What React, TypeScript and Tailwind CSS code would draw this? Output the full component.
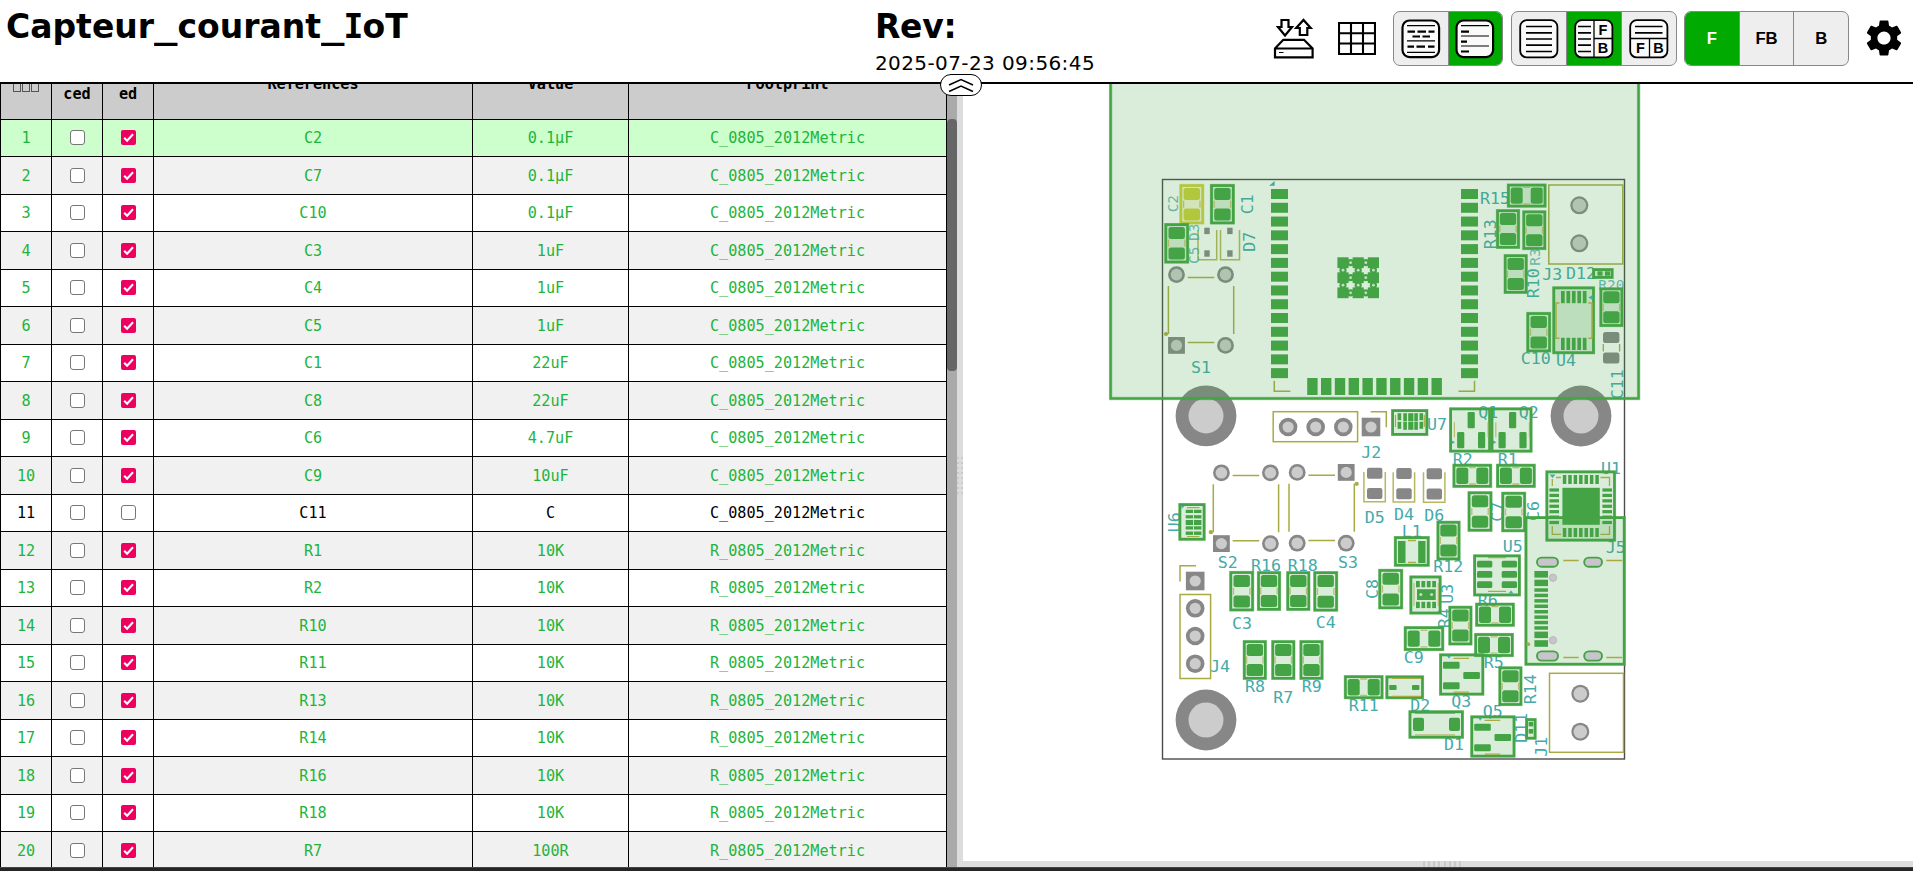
import React from "react";
import { MdSettings } from "react-icons/md";

const G = "#44a344";
const SILK = "#aaaa44";
const PAD = "#878787";
const HOLE = "#cccccc";

type Row = [string, string, string];
const C = "C_0805_2012Metric";
const R = "R_0805_2012Metric";
const rows: Row[] = [
  ["C2", "0.1µF", C], ["C7", "0.1µF", C], ["C10", "0.1µF", C], ["C3", "1uF", C], ["C4", "1uF", C],
  ["C5", "1uF", C], ["C1", "22uF", C], ["C8", "22uF", C], ["C6", "4.7uF", C], ["C9", "10uF", C],
  ["C11", "C", C], ["R1", "10K", R], ["R2", "10K", R], ["R10", "10K", R], ["R11", "10K", R],
  ["R13", "10K", R], ["R14", "10K", R], ["R16", "10K", R], ["R18", "10K", R], ["R7", "100R", R],
];

function Check({ on }: { on: boolean }) {
  return on ? (
    <svg width="15" height="15" viewBox="0 0 15 15">
      <rect width="15" height="15" rx="2" fill="#ed0060" />
      <path d="M3.2 7.8 L6.1 10.7 L12 4.2" fill="none" stroke="#fff" strokeWidth="2.1" />
    </svg>
  ) : (
    <span className="block h-[15px] w-[15px] rounded-[3px] border border-[#767676] bg-white" />
  );
}

const COLS = "grid grid-cols-[52px_51px_51px_319px_156px_318px]";

function BomTable() {
  return (
    <div className="flex h-[783px] w-[957px] overflow-hidden bg-[#aaa]">
      <div className="w-[947px] shrink-0 font-['DejaVu_Sans_Mono',monospace] text-[15.17px] leading-none">
        <div className={`${COLS} h-[36px] border-b border-black bg-[#ccc] text-center font-bold text-black`}>
          <div className="flex justify-center gap-[1px] overflow-hidden border-x border-black">
            <span className="-mt-[4px] h-[12px] w-[8px] border border-[#555]" />
            <span className="-mt-[4px] h-[12px] w-[8px] border border-[#555]" />
            <span className="-mt-[4px] h-[12px] w-[8px] border border-[#555]" />
          </div>
          <div className="overflow-hidden border-r border-black pt-[3px]">ced</div>
          <div className="overflow-hidden border-r border-black pt-[3px]">ed</div>
          <div className="overflow-hidden border-r border-black"><div className="-mt-[7px]">References</div></div>
          <div className="overflow-hidden border-r border-black"><div className="-mt-[7px]">Value</div></div>
          <div className="overflow-hidden border-r border-black"><div className="-mt-[7px]">Footprint</div></div>
        </div>
        {rows.map(([ref, val, fp], i) => {
          const placed = i !== 10;
          const bg = i === 0 ? "bg-[#ccffcc]" : i % 2 ? "bg-[#f1f1f1]" : "bg-white";
          const cell = "flex items-center justify-center border-r border-b border-black";
          return (
            <div key={ref} className={`${COLS} ${i % 2 ? "h-[38px]" : "h-[37px]"} ${bg} ${placed ? "text-[#1eb43c]" : "text-black"}`}>
              <div className={`${cell} border-l pt-[2px]`}>{i + 1}</div>
              <div className={`${cell} pb-[1px]`}><Check on={false} /></div>
              <div className={`${cell} pb-[1px]`}><Check on={placed} /></div>
              <div className={`${cell} pt-[2px]`}>{ref}</div>
              <div className={`${cell} pt-[2px]`}>{val}</div>
              <div className={`${cell} pt-[2px]`}>{fp}</div>
            </div>
          );
        })}
      </div>
      <div className="w-[10px] shrink-0 pt-[35px]">
        <div className="h-[252px] rounded-[4px] bg-[#666]" />
      </div>
    </div>
  );
}

/* ---------- board ---------- */

function Box({ x, y, w, h, c = G }: { x: number; y: number; w: number; h: number; c?: string }) {
  return (
    <g>
      <rect x={x} y={y} width={w} height={h} fill={c} fillOpacity=".2" />
      <rect x={x + 0.5} y={y + 0.5} width={w - 1} height={h - 1} fill="none" stroke={c} strokeOpacity=".45" strokeWidth="1" />
      <rect x={x + 1.7} y={y + 1.7} width={w - 3.4} height={h - 3.4} fill="none" stroke={c} strokeWidth="2.6" />
    </g>
  );
}

function P({ x, y, w, h, r = 0, c = G }: { x: number; y: number; w: number; h: number; r?: number; c?: string }) {
  return <rect x={x} y={y} width={w} height={h} rx={r} fill={c} />;
}

/* Two-terminal 0805 part, centred on (x, y). */
function Chip({ x, y, hz, cap, c = G }: { x: number; y: number; hz?: boolean; cap?: boolean; c?: string }) {
  const h = cap ? 40.6 : 39.8;
  const w = cap ? 25 : 24.2;
  const o = cap ? 10.3 : 10;
  return (
    <g transform={`translate(${x} ${y})${hz ? " rotate(90)" : ""}`}>
      <Box x={-w / 2} y={-h / 2} w={w} h={h} c={c} />
      <path d="M-8.2 -3.5V3.5M8.2 -3.5V3.5" stroke={SILK} strokeOpacity=".7" strokeWidth="1.3" />
      <P x={-8.2} y={-o - 6} w={16.4} h={12} r={2.5} c={c} />
      <P x={-8.2} y={o - 6} w={16.4} h={12} r={2.5} c={c} />
    </g>
  );
}

function Ring({ x, y, r, i }: { x: number; y: number; r: number; i: number }) {
  return (
    <g>
      <circle cx={x} cy={y} r={r} fill={PAD} />
      <circle cx={x} cy={y} r={i} fill={HOLE} />
    </g>
  );
}

function SqPad({ x, y, s, i }: { x: number; y: number; s: number; i: number }) {
  return (
    <g>
      <rect x={x - s / 2} y={y - s / 2} width={s} height={s} fill={PAD} />
      <circle cx={x} cy={y} r={i} fill={HOLE} />
    </g>
  );
}

function Switch({ x, y, flip }: { x: number; y: number; flip?: boolean }) {
  return (
    <g transform={`translate(${x} ${y})${flip ? " rotate(180)" : ""}`}>
      <path d="M-13.3 -32.6H13.3M-13.3 32.5H13.3M-32.6 -24V24M32.7 -24V24" stroke={SILK} strokeWidth="1.5" />
      <circle cx="-35" cy="24" r="2.1" fill={SILK} />
      <Ring x={-24.5} y={-35.4} r={8.4} i={5.8} />
      <Ring x={24.5} y={-35.4} r={8.4} i={5.8} />
      <Ring x={24.5} y={35.4} r={8.4} i={5.8} />
      <SqPad x={-24.5} y={35.4} s={16.8} i={5.6} />
    </g>
  );
}

function Led({ x, y }: { x: number; y: number }) {
  return (
    <g transform={`translate(${x} ${y})`}>
      <path d="M-10.8 -11.5V18.4H10.6V-11.5" fill="none" stroke={SILK} strokeWidth="1.5" strokeOpacity=".85" />
      <P x={-7.7} y={-15.6} w={15.4} h={11} r={2} c={PAD} />
      <P x={-7.7} y={4.6} w={15.4} h={11} r={2} c={PAD} />
    </g>
  );
}

function Sot({ x, y }: { x: number; y: number }) {
  return (
    <g transform={`translate(${x} ${y})`}>
      <Box x={0} y={0} w={45.4} h={42.4} />
      <path d="M14.5 5H30M14.5 38.9H30" stroke={SILK} strokeWidth="1.2" />
      <path d="M8 2.5H12L10 5.5Z" fill="#44aaaa" />
      <P x={4} y={8.5} w={16.6} h={7} r={1.3} />
      <P x={24.3} y={18.7} w={16.6} h={7} r={1.3} />
      <P x={4} y={29} w={16.6} h={7} r={1.3} />
    </g>
  );
}

function SotV({ x, y }: { x: number; y: number }) {
  return (
    <g transform={`translate(${x} ${y})`}>
      <Box x={0} y={0} w={42.2} h={45.4} />
      <path d="M5.4 15V30M39 15V30" stroke={SILK} strokeWidth="1.2" strokeOpacity=".7" />
      <path d="M2.5 33V37L6 35Z" fill="#44aaaa" />
      <P x={18.6} y={4.7} w={7.2} h={16.2} r={1.3} />
      <P x={8.1} y={24.8} w={7.2} h={16.2} r={1.3} />
      <P x={29} y={24.8} w={7.2} h={16.2} r={1.3} />
    </g>
  );
}

/* Designator, centre x, centre y, vertical, thin */
const labels: [string, number, number, number?, number?][] = [
  ["C2", 1172.3, 203.7, 1, 1], ["C1", 1247, 204.3, 1], ["D7", 1249, 241.7, 1], ["D3", 1193.3, 232.3, 1, 1],
  ["C5", 1193.3, 255.3, 1, 1], ["S1", 1201, 367], ["R15", 1495, 197.7], ["R13", 1490.3, 234.3, 1],
  ["R3", 1534.3, 257, 1, 1], ["R10", 1533, 283.3, 1], ["J3", 1552.3, 273.7], ["D12", 1581, 273],
  ["R20", 1611.3, 285, 0, 1], ["C10", 1535.7, 358.3], ["U4", 1566, 359.7], ["C11", 1617, 384.3, 1],
  ["J2", 1371.3, 451.7], ["U6", 1174.3, 522.3, 1], ["D5", 1374.7, 516.7], ["D4", 1404, 513.7],
  ["L1", 1411.7, 531], ["S2", 1227.7, 561.7], ["R16", 1266, 565.3], ["R18", 1302.7, 565.3], ["S3", 1348, 562],
  ["U7", 1437, 424.3], ["Q1", 1488.3, 412.3], ["Q2", 1528.7, 412.3], ["R2", 1462.7, 458.7], ["R1", 1507.7, 459.3],
  ["U1", 1611, 468], ["C7", 1497.3, 511.7, 1], ["C6", 1533.3, 511, 1], ["D6", 1434.3, 515.3],
  ["U5", 1512.7, 546], ["J5", 1615.7, 546.7], ["R12", 1448.3, 565.7], ["C3", 1242, 623], ["C4", 1325.7, 622],
  ["R8", 1255, 686.3], ["R7", 1283.3, 697], ["R9", 1311.7, 686.3], ["J4", 1220, 666.3], ["R11", 1363.7, 705],
  ["C8", 1372.3, 589, 1], ["C9", 1413.7, 656.7], ["U3", 1447, 593.7, 1], ["R4", 1443.7, 618.3, 1],
  ["R6", 1487.7, 599.7], ["R5", 1493.7, 662.3], ["Q3", 1461.3, 700.7], ["D2", 1420.3, 705], ["D1", 1454, 743.7],
  ["Q5", 1492.7, 711], ["D11", 1521.3, 727.7, 1], ["R14", 1530.3, 689.3, 1], ["J1", 1541, 746.7, 1],
];

function Label({ t, x, y, v, thin }: { t: string; x: number; y: number; v?: boolean; thin?: boolean }) {
  const fs = thin ? 14.4 : 16.6;
  return (
    <text
      transform={`translate(${x} ${y})${v ? " rotate(-90)" : ""}`}
      y={fs * 0.365}
      textAnchor="middle"
      fontFamily="'DejaVu Sans Mono', monospace"
      fontSize={fs}
      fill="#44aaaa"
      fillOpacity={thin ? 0.8 : 1}
    >
      {t}
    </text>
  );
}

const range = (n: number) => Array.from({ length: n }, (_, i) => i);

function Via({ x, y }: { x: number; y: number }) {
  return (
    <g>
      <circle cx={x} cy={y} r="3.6" fill={G} />
      <circle cx={x} cy={y} r="1.4" fill="#c4dfc4" />
    </g>
  );
}

function Thermal() {
  const xs = [1343, 1358.2, 1373.4];
  const ys = [262.7, 277.7, 292.8];
  return (
    <g>
      {ys.map((y) => xs.map((x) => <P key={`${x}-${y}`} x={x - 5.6} y={y - 5.4} w={11.2} h={10.8} />))}
      {ys.flatMap((y) => [1350.6, 1365.8].map((x) => <Via key={`h${x}-${y}`} x={x} y={y} />))}
      {[270.2, 285.2].flatMap((y) => xs.map((x) => <Via key={`v${x}-${y}`} x={x} y={y} />))}
    </g>
  );
}

function Board() {
  return (
    <svg className="block" width="950" height="777" viewBox="963 84 950 777">
      <rect x="1162.5" y="179.5" width="462" height="579.5" fill="none" stroke="#4c4c4c" strokeWidth="1.4" />
      <Ring x={1206} y={415.9} r={30.4} i={17.5} />
      <Ring x={1581} y={416} r={30.4} i={17.5} />
      <Ring x={1206} y={720} r={30.4} i={17.5} />

      <g fill="none" stroke={SILK} strokeWidth="1.5">
        <rect x="1548.8" y="185" width="74" height="79" />
        <rect x="1549.5" y="673.3" width="74" height="79" />
        <rect x="1273.2" y="411.7" width="84.4" height="30" />
        <path d="M1370.7 411.7H1386.3V427.3" />
        <rect x="1180" y="594.5" width="30.6" height="84" />
        <path d="M1180 581.5V565.7H1196" />
        <path d="M1198 230V259.7H1216.7V230M1220.5 230V259.7H1239.5V230" strokeOpacity=".85" />
        <path d="M1274.3 380.7V391.3H1290.3M1474.5 380.7V391.3H1458.5" />
      </g>
      <P x={1204.3} y={227.7} w={5.4} h={6.4} c={PAD} />
      <P x={1204.3} y={250.3} w={5.4} h={6.4} c={PAD} />
      <P x={1227.2} y={227.7} w={5.4} h={6.4} c={PAD} />
      <P x={1227.2} y={250.3} w={5.4} h={6.4} c={PAD} />
      <path d="M1603.3 344V351.5M1619.6 344V351.5" stroke={SILK} strokeWidth="1.3" />
      <P x={1603} y={332} w={16.4} h={11} r={2.5} c={PAD} />
      <P x={1603} y={352.6} w={16.4} h={11} r={2.5} c={PAD} />

      {[205.3, 243.3].map((y) => <Ring key={y} x={1579.3} y={y} r={9} i={6.8} />)}
      {[693.7, 731.7].map((y) => <Ring key={y} x={1580.3} y={y} r={9} i={6.8} />)}
      {[1288.1, 1315.7, 1343.3].map((x) => <Ring key={x} x={x} y={427} r={9.3} i={5.6} />)}
      <SqPad x={1371} y={427} s={18.6} i={5.6} />
      {[608.3, 636, 663.7].map((y) => <Ring key={y} x={1195.2} y={y} r={9.3} i={5.6} />)}
      <SqPad x={1195.2} y={581} s={18.6} i={5.6} />
      <Switch x={1201} y={310} />
      <Switch x={1245.9} y={508.2} />
      <Switch x={1321.7} y={507.8} flip />
      <Led x={1374.7} y={483.4} />
      <Led x={1404} y={483.7} />
      <Led x={1434.3} y={483.8} />

      {labels.map(([t, x, y, v, thin]) => (
        <Label key={t} t={t} x={x} y={y} v={!!v} thin={!!thin} />
      ))}
      <path d="M1269 185.8H1274.6V181Z" fill="#44aaaa" />

      {/* U2 module */}
      <rect x="1110" y="60" width="529" height="339" fill={G} fillOpacity=".2" />
      <rect x="1110.6" y="60" width="528" height="338.5" fill="none" stroke={G} strokeOpacity=".5" strokeWidth="3.4" />
      <rect x="1110.6" y="60" width="528" height="338.5" fill="none" stroke={G} strokeWidth="2.2" />
      {range(14).map((i) => <P key={i} x={1271} y={189 + i * 13.78} w={17} h={10} />)}
      {range(14).map((i) => <P key={i} x={1461} y={189 + i * 13.78} w={17} h={10} />)}
      {range(10).map((i) => <P key={i} x={1307.2 + i * 13.81} y={378} w={10.4} h={17} />)}
      <Thermal />

      <Chip x={1191.8} y={204.2} cap c="#b3c73e" />
      <Chip x={1222.4} y={204.2} cap />
      <Chip x={1176.7} y={243.3} cap />
      <Chip x={1526.7} y={195.6} hz />
      <Chip x={1508} y={229} />
      <Chip x={1534.3} y={230.2} />
      <Chip x={1515.7} y={274} />
      <Chip x={1538.7} y={332.2} cap />
      <Chip x={1611.4} y={307.2} />
      <Chip x={1472.3} y={475.8} hz />
      <Chip x={1515.9} y={475.8} hz />
      <Chip x={1480} y={511.5} cap />
      <Chip x={1513.7} y={512} cap />
      <Chip x={1448.5} y={540.6} />
      <Chip x={1241.7} y={591.2} cap />
      <Chip x={1269} y={591} />
      <Chip x={1298.3} y={591} />
      <Chip x={1325.7} y={591.4} cap />
      <Chip x={1254.8} y={660} />
      <Chip x={1283.3} y={660} />
      <Chip x={1311.5} y={660} />
      <Chip x={1390.7} y={589.1} cap />
      <Chip x={1363.7} y={687.2} hz />
      <Chip x={1495} y={614.7} hz />
      <Chip x={1460.4} y={625.6} />
      <Chip x={1424} y={638.6} hz cap />
      <Chip x={1494} y={645} hz />
      <Chip x={1510.4} y={686.2} />

      {/* U4 */}
      <Box x={1552.2} y={286.3} w={42.9} h={68} />
      <path d="M1559.5 303H1556V338.3H1559.5M1588.3 303H1592V338.3H1588.3" fill="none" stroke={SILK} strokeWidth="1.5" />
      <path d="M1592.5 295V300L1588.5 297.5Z" fill="#44aaaa" />
      {range(5).map((i) => (
        <g key={i}>
          <P x={1561 + i * 5.45} y={291} w={3.7} h={12.2} />
          <P x={1561 + i * 5.45} y={337.8} w={3.7} h={12.2} />
        </g>
      ))}
      {/* D12 */}
      <Box x={1592} y={268} w={21.7} h={11} />
      <P x={1597.5} y={271.3} w={5} h={4.4} />
      <P x={1605} y={271.3} w={5} h={4.4} />
      {/* U7 */}
      <Box x={1391} y={409} w={37.4} h={27} />
      <path d="M1395.5 415V427M1424.3 415V427" stroke={SILK} strokeWidth="1.2" />
      {[[1397.6, 3.6, 7], [1403.3, 3.6, 8], [1408.2, 5.2, 8], [1414.3, 3.6, 8], [1419.5, 3.6, 7]].map(([x, w, h]) => (
        <g key={x}>
          <P x={x} y={413.2} w={w} h={h} />
          <P x={x} y={421.8} w={w} h={h} />
        </g>
      ))}
      {/* U6 */}
      <Box x={1178.3} y={503} w={27.4} h={37.8} />
      <path d="M1187 507.7H1199.5M1187 536.5H1199.5" stroke={SILK} strokeWidth="1.2" />
      <path d="M1181.5 506H1184.5L1181.5 509Z" fill="#44aaaa" />
      {[[509.8, 3.2], [515.2, 3.2], [520, 5], [526.3, 3.2], [531.5, 3.4]].map(([y, h]) => (
        <g key={y}>
          <P x={1185.7} y={y} w={7.4} h={h} />
          <P x={1194} y={y} w={7.4} h={h} />
        </g>
      ))}
      {/* Q1, Q2 */}
      <SotV x={1449} y={407.3} />
      <SotV x={1490.4} y={407.3} />
      {/* U1 */}
      <Box x={1545.3} y={470.3} w={70.8} h={71.4} />
      <path d="M1552.3 486V479M1556 477.5H1561M1600.5 477.5H1609.5V486M1552.3 526V534.3H1561M1600.5 534.3H1609.5V526" fill="none" stroke={SILK} strokeWidth="1.3" />
      <path d="M1549.5 474.5H1555.5L1552.5 478Z" fill="#44aaaa" />
      <P x={1562.4} y={487.8} w={37.4} h={37} />
      {range(7).map((i) => (
        <g key={i}>
          <P x={1562.8 + i * 5.42} y={475} w={3.5} h={9} />
          <P x={1562.8 + i * 5.42} y={528} w={3.5} h={9} />
          <P x={1549.4} y={488.4 + i * 5.42} w={9.6} h={3.2} />
          <P x={1602.4} y={488.4 + i * 5.42} w={9.6} h={3.2} />
        </g>
      ))}
      {/* J5 */}
      <Box x={1524.4} y={516} w={101.4} h={149.8} />
      <path d="M1563.3 560.5H1578.7M1606.3 560.5H1622.3M1563.3 657.4H1578.7M1606.3 657.4H1622.3" stroke={SILK} strokeWidth="1.5" />
      {[556.6, 650.4].map((y) => (
        <g key={y} fill="#c8c4cc" stroke={G} strokeWidth="1.9">
          <rect x="1537" y={y + 1} width="21" height="9.2" rx="4.6" />
          <rect x="1584.2" y={y + 1} width="17.8" height="9.2" rx="4.6" />
        </g>
      ))}
      {[[571, 6.6], [579.7, 6.4], [588.3, 3.5], [593.7, 3.5], [599.1, 3.5], [604.5, 3.5], [610, 3.5], [615.4, 3.5], [620.8, 3.5], [626.2, 3.5], [631.6, 6.5], [640.2, 6.6]].map(([y, h]) => (
        <P key={y} x={1534.4} y={y} w={13.6} h={h} />
      ))}
      <g fill="#c8c4cc" stroke="#b0b4b1" strokeWidth=".8">
        <circle cx="1553" cy="577.7" r="3.7" />
        <circle cx="1553" cy="640.3" r="3.7" />
      </g>
      <circle cx="1528.3" cy="644.2" r="1.9" fill={SILK} />
      {/* L1 */}
      <Box x={1393.8} y={536} w={36} h={30.8} />
      <path d="M1408 540.5H1416M1408 562.4H1416" stroke={SILK} strokeWidth="1.3" />
      <P x={1398} y={541} w={7.5} h={22} />
      <P x={1418.2} y={541} w={7.3} h={22} />
      {/* U3 */}
      <Box x={1409.3} y={575.4} w={32.4} h={39.2} />
      <path d="M1414 583V606M1438.3 583V606" stroke={SILK} strokeWidth="1.2" strokeOpacity=".7" />
      {range(4).map((i) => (
        <g key={i}>
          <P x={1416 + i * 5.4} y={581} w={3.8} h={6.3} />
          <P x={1416 + i * 5.4} y={601.8} w={3.8} h={6.3} />
        </g>
      ))}
      <P x={1417} y={589.2} w={18.7} h={10.8} />
      <circle cx="1420.8" cy="594.4" r="1.5" fill="#c4dfc4" />
      <circle cx="1431.6" cy="594.4" r="1.5" fill="#c4dfc4" />
      {/* U5 */}
      <Box x={1473} y={554.3} w={48} h={42.2} />
      <path d="M1488 557.7H1506M1488 591.4H1506" stroke={SILK} strokeWidth="1.2" />
      <path d="M1508.5 593.5L1511 590.5L1513.5 593.5Z" fill="#44aaaa" />
      {[560.7, 571, 581.3].map((y) => (
        <g key={y}>
          <P x={1477} y={y} w={15.3} h={6.8} r={1.5} />
          <P x={1501.7} y={y} w={15.3} h={6.8} r={1.5} />
        </g>
      ))}
      {/* Q3, Q5 */}
      <Sot x={1439} y={653.3} />
      <Sot x={1470.2} y={715.3} />
      {/* D2 */}
      <Box x={1385.3} y={675.3} w={38.8} h={24} />
      <path d="M1392 678.4H1421M1392 696.4H1421" stroke={SILK} strokeWidth="1.2" />
      <P x={1389.2} y={684.9} w={7.4} h={5.2} r={1} />
      <P x={1412} y={684.9} w={7.4} h={5.2} r={1} />
      {/* D1 */}
      <Box x={1408.4} y={710.2} w={55.6} h={28.6} />
      <path d="M1415 713.5H1455M1415 735H1455" stroke={SILK} strokeWidth="1.2" />
      <P x={1413} y={717.7} w={11} h={13.4} r={2} />
      <P x={1449} y={717.7} w={11} h={13.4} r={2} />
      {/* D11 */}
      <Box x={1525} y={718} w={11.7} h={21.8} />
      <P x={1528.6} y={721.8} w={4.6} h={4.6} />
      <P x={1528.6} y={729} w={4.6} h={4.6} />
    </svg>
  );
}

/* ---------- toolbar ---------- */

function Frame({ children }: { children: React.ReactNode }) {
  return (
    <svg width="40" height="40" viewBox="0 0 40 40" fill="none" stroke="#000">
      <rect x="1.2" y="1.2" width="37.2" height="37.2" rx="6.5" fill="#fafafa" strokeWidth="1.8" />
      {children}
    </svg>
  );
}

const letter = { fontFamily: "'Liberation Sans', Arial, sans-serif", fontWeight: 700, fontSize: 14.5, fill: "#000", stroke: "none", textAnchor: "middle" as const };

const group = "flex h-[55px] overflow-hidden rounded-[7px] border border-[#888] bg-[#eee]";
const btn = "flex w-[55px] items-center justify-center border-r border-[#888] last:w-[54px] last:border-r-0";

function Toolbar() {
  return (
    <div className="flex items-start pt-[11px]">
      <svg className="mt-[7px] mr-[23px]" width="42" height="42" viewBox="0 0 42 42" fill="none" stroke="#000" strokeWidth="2.2">
        <path d="M8.5 2H15.5V9H19L12 17.5L5 9H8.5Z" />
        <path d="M26.8 17V10H23.2L30.5 2L37.7 10H34.3V17Z" />
        <path d="M2 30.5L10.3 21.8H31L39.6 30.5V39.3H2ZM2 30.5H39.6" />
        <path d="M6 34.5H10.5" strokeWidth="1" />
      </svg>
      <svg className="mt-[11px] mr-[17px]" width="38" height="33" viewBox="0 0 38 33" fill="none" stroke="#000" strokeWidth="2.1">
        <path d="M1 1H37V32H1ZM1 11.3H37M1 21.5H37M13 1V32M25 1V32" />
      </svg>
      <div className={`${group} mr-[8px] w-[110px]`}>
        <div className={btn}>
          <svg width="40" height="40" viewBox="0 0 40 40" stroke="#000">
            <rect x="1.5" y="1.5" width="36.6" height="36.6" rx="7" fill="#fafafa" strokeWidth="2.2" />
            <path d="M6 6.7H34M6 21.8H34M6 33.3H34" strokeWidth="1.2" />
            <path d="M6.5 12.7H14M16.5 12.7H25M27.5 12.7H33.5M11.5 17.5H19M21.5 17.5H29M6.5 27.7H13M15.5 27.7H24M27 27.7H33.5" strokeWidth="2.2" />
          </svg>
        </div>
        <div className={`${btn} bg-[#00aa00]`}>
          <svg width="40" height="40" viewBox="0 0 40 40" stroke="#000">
            <rect x="1.5" y="1.5" width="36.6" height="36.6" rx="7" fill="#fafafa" strokeWidth="2.2" />
            <path d="M6 6.7H34M6 17H34M6 27H34" strokeWidth="1.2" />
            <path d="M6 12.7H14M6 22.7H12M6 32.5H14" strokeWidth="2.2" />
          </svg>
        </div>
      </div>
      <div className={`${group} mr-[7px] w-[166px]`}>
        <div className={btn}>
          <Frame><path d="M7 7.5H33M7 13.8H33M7 20H33M7 26.2H33M7 32.5H33" strokeWidth="1.7" /></Frame>
        </div>
        <div className={`${btn} bg-[#00aa00]`}>
          <Frame>
            <path d="M4 7.5H17M4 13.8H17M4 20H17M4 26.2H17M4 32.5H17" strokeWidth="1.7" />
            <path d="M20 1V38.5M20 19.5H38" strokeWidth="1.3" />
            <text x="29" y="15.5" {...letter}>F</text>
            <text x="29" y="33.5" {...letter}>B</text>
          </Frame>
        </div>
        <div className={btn}>
          <Frame>
            <path d="M6 7.5H33.5M6 13.8H33.5" strokeWidth="1.7" />
            <path d="M1 19.5H38.5M20.5 19.5V38" strokeWidth="1.3" />
            <text x="11.5" y="33.5" {...letter}>F</text>
            <text x="29.5" y="33.5" {...letter}>B</text>
          </Frame>
        </div>
      </div>
      <div className={`${group} mr-[13px] w-[165px] font-['Liberation_Sans',Arial,sans-serif] text-[16.7px] font-bold`}>
        <div className={`${btn} bg-[#00aa00] text-white`}>F</div>
        <div className={btn}>FB</div>
        <div className={btn}>B</div>
      </div>
      <MdSettings className="mt-[5px] mr-[7px] h-[44px] w-[44px] text-black" />
    </div>
  );
}

function Underscore() {
  return <span className="inline-block w-[23.5px]"><span className="inline-block origin-left scale-x-[1.42]">_</span></span>;
}

export default function App() {
  return (
    <div className="flex h-[871px] w-[1913px] flex-col overflow-hidden bg-white text-black">
      <header className="flex h-[84px] shrink-0 border-b-2 border-black font-['DejaVu_Sans',sans-serif]">
        <div className="w-[875px] pt-[5px] pl-[6px] text-[33px] leading-[44px] font-bold whitespace-nowrap">
          Capteur<Underscore />courant<Underscore /><span className="-mx-[1px] font-['DejaVu_Sans_Mono',monospace]">I</span>oT
        </div>
        <div className="flex-1">
          <div className="pt-[5px] text-[33px] leading-[44px] font-bold tracking-[-0.3px]">Rev:</div>
          <div className="text-[20px] leading-[28px] tracking-[0.4px]">2025-07-23 09:56:45</div>
        </div>
        <Toolbar />
      </header>
      <main className="relative flex h-[783px] shrink-0">
        <BomTable />
        <div className="flex w-[6px] flex-col items-stretch justify-center bg-[#dcdcdc]">
          <div className="flex h-[38px] flex-col justify-between">
            {range(8).map((i) => (
              <span key={i} className="flex h-[2px] justify-between">
                <i className="w-[2px] bg-[#cacaca]" />
                <i className="w-[2px] bg-[#cacaca]" />
              </span>
            ))}
          </div>
        </div>
        <div className="flex w-[950px] flex-col">
          <Board />
          <div className="flex h-[6px] justify-center bg-[#dcdcdc]">
            <div className="ml-[8px] flex w-[38px] justify-between">
              {range(8).map((i) => <span key={i} className="w-[2px] bg-[#cacaca]" />)}
            </div>
          </div>
        </div>
        <div className="absolute -top-[10px] left-[940px] flex h-[22px] w-[42px] items-center justify-center rounded-[11px] border border-black bg-white">
          <svg width="28" height="16" viewBox="0 0 28 16" fill="none" stroke="#000" strokeWidth="1.5">
            <path d="M2 8L14 2.5L26 8M2 14.5L14 9L26 14.5" />
          </svg>
        </div>
      </main>
      <footer className="h-[4px] border-t border-[#444] bg-[#252525]" />
    </div>
  );
}
